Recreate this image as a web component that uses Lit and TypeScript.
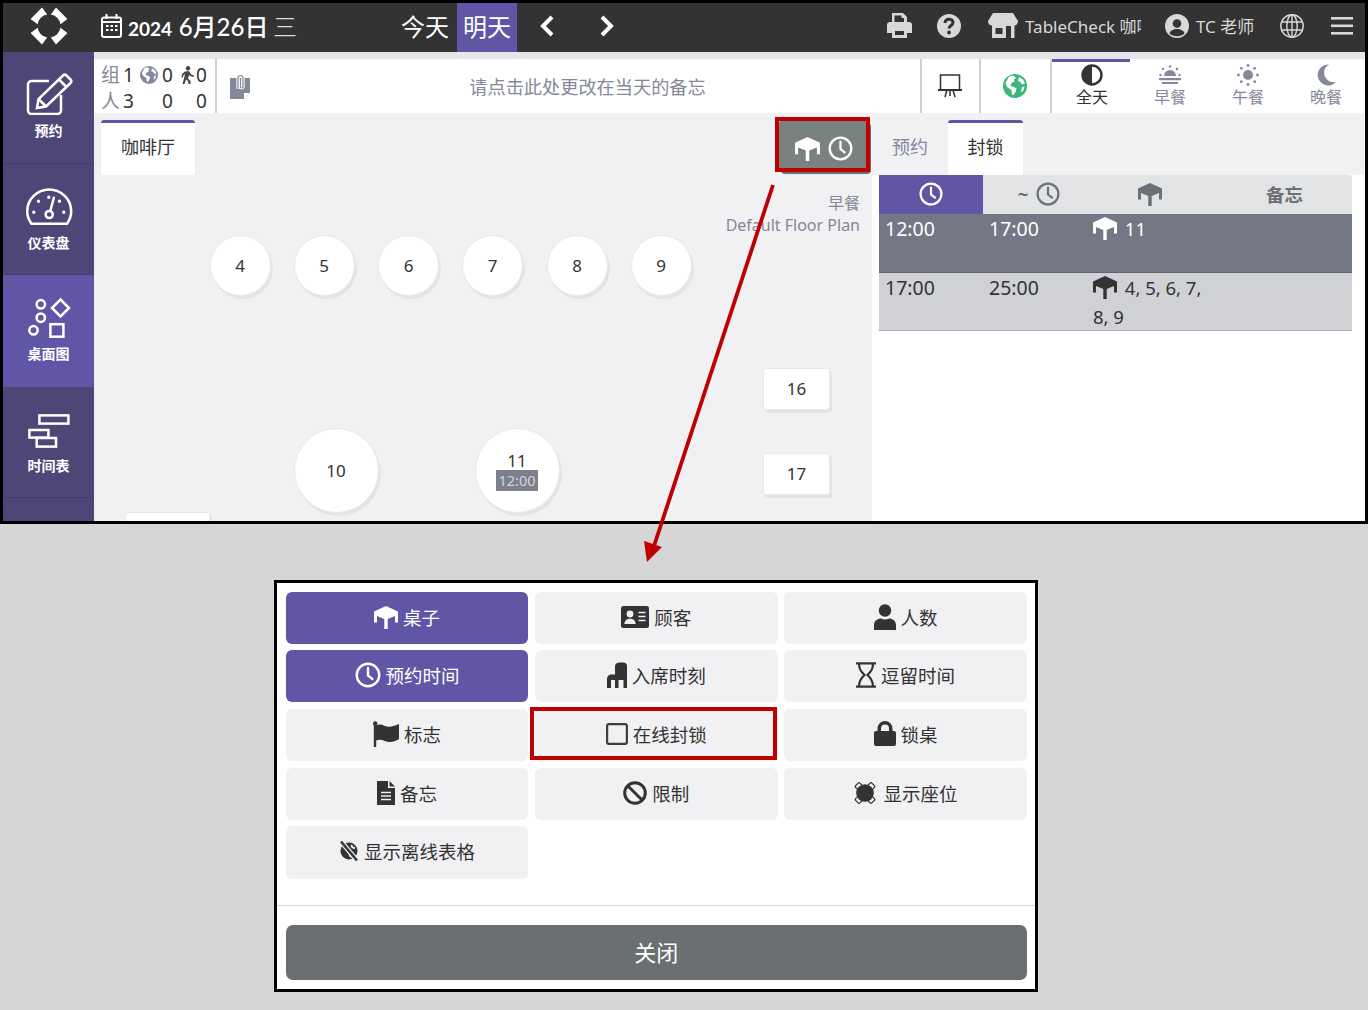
import { LitElement, html, css, svg } from 'lit';
import { customElement } from 'lit/decorators.js';

const table = (size = 24) => html`<svg class="ic" width=${size} height=${size} viewBox="0 0 24 24" fill="currentColor">
  <path d="M12 1 24 6.500V17.500H21V11L13.700 14V24H10.300V14L3 11V17.500H0V6.500z"/></svg>`;
const clock = (size = 26) => html`<svg class="ic" width=${size} height=${size} viewBox="0 0 24 24" fill="none" stroke="currentColor" stroke-width="2.200">
  <circle cx="12" cy="12" r="10.400"/><path d="M12 5.500V12.500l4 3.200" stroke-linecap="round"/></svg>`;

const icons: Record<string, unknown> = {
  table: table(24),
  clock: clock(26),
  card: html`<svg class="ic" width="28" height="22" viewBox="0 0 28 22"><rect width="28" height="22" rx="2.500" fill="currentColor"/>
    <circle cx="9" cy="8" r="3.400" fill="#f1f1f3"/><path d="M3.400 18c0-7 11.200-7 11.200 0z" fill="#f1f1f3"/>
    <path d="M17.500 6.500h7M17.500 10.500h7M17.500 14.500h7" stroke="#f1f1f3" stroke-width="1.700"/></svg>`,
  person: html`<svg class="ic" width="22" height="26" viewBox="0 0 22 26" fill="currentColor"><circle cx="11" cy="6.500" r="6.200"/><path d="M0 26v-4.500C0 16.500 3.500 14.500 7 14.500c1.300.6 2.500 1 4 1s2.700-.4 4-1c3.500 0 7 2 7 7V26z"/></svg>`,
  chair: html`<svg class="ic" width="20" height="26" viewBox="0 0 20 26" fill="currentColor"><path d="M8 4.500C8 2 10 .5 12.500.5h4C18.500.5 20 2 20 4v22h-3.500v-8h-5v8H8v-8H4v8H0v-9c0-3 2-4.500 4-4.500h4z"/></svg>`,
  hourglass: html`<svg class="ic" width="20" height="26" viewBox="0 0 20 26" fill="none" stroke="currentColor" stroke-width="2.300"><path d="M0 1.300h20M0 24.700h20M3 1.300c0 5 1 7.700 5.500 11.700C4 17 3 20 3 24.700M17 1.300c0 5-1 7.700-5.500 11.700C16 17 17 20 17 24.700"/></svg>`,
  flag: html`<svg class="ic" width="26" height="26" viewBox="0 0 26 26" fill="currentColor"><circle cx="2.200" cy="2.500" r="2.200"/><path d="M.8 3h2.400v23H.8z"/><path d="M3 4.500c6-3.500 9 2.500 15.500 1 2.500-.5 5-1.500 7.500-2.500v15c-3 2-6 3-9 3-5.500 0-8-4-14-1.500z"/></svg>`,
  square: html`<svg class="ic" width="22" height="22" viewBox="0 0 22 22" fill="none" stroke="#3f3f3f" stroke-width="2.200"><rect x="1.100" y="1.100" width="19.800" height="19.800" rx="1.800"/></svg>`,
  lock: html`<svg class="ic" width="22" height="25" viewBox="0 0 22 25" fill="currentColor"><path d="M3.500 10V7.500a7.500 7.500 0 0 1 15 0V10H20a2 2 0 0 1 2 2v11a2 2 0 0 1-2 2H2a2 2 0 0 1-2-2V12a2 2 0 0 1 2-2zm3.500 0h8V7.500a4 4 0 0 0-8 0z"/></svg>`,
  doc: html`<svg class="ic" width="18" height="24" viewBox="0 0 18 24"><path d="M0 0h11v7h7v17H0z" fill="currentColor"/><path d="M12.500 0 18 5.500h-5.500z" fill="currentColor"/><path d="M4 11.500h10M4 15h10M4 18.500h10" stroke="#f1f1f3" stroke-width="1.500"/></svg>`,
  ban: html`<svg class="ic" width="24" height="24" viewBox="0 0 24 24" fill="none" stroke="currentColor" stroke-width="3"><circle cx="12" cy="12" r="10.300"/><path d="M4.700 4.700 19.300 19.300"/></svg>`,
  seats: html`<svg class="ic seat" width="22" height="22" viewBox="0 0 22 22"><g fill="#f1f1f3" stroke="currentColor" stroke-width="1.300"><rect x="2" y="1.500" width="6" height="6" rx="1.200" transform="rotate(45 5 4.500)"/><rect x="14" y="1.500" width="6" height="6" rx="1.200" transform="rotate(45 17 4.500)"/><rect x="2" y="14.500" width="6" height="6" rx="1.200" transform="rotate(45 5 17.500)"/><rect x="14" y="14.500" width="6" height="6" rx="1.200" transform="rotate(45 17 17.500)"/></g><circle cx="11" cy="11" r="8.800" fill="currentColor"/></svg>`,
  offline: html`<svg class="ic" width="20" height="22" viewBox="0 0 20 22"><circle cx="10" cy="11" r="8.500" fill="currentColor"/><path d="M5 6.500c3 .5 2 3 4 4.500s1 4 3 6M13 5c-1 2 1 3 3 3" stroke="#f1f1f3" stroke-width="2" fill="none"/><path d="M2 1.500 18 20.500" stroke="#f1f1f3" stroke-width="5"/><path d="M2 1.500 18 20.500" stroke="currentColor" stroke-width="2.500"/></svg>`,
};

const globe = (size: number, fill: string, land: string) => html`<svg class="ic" width=${size} height=${size} viewBox="0 0 24 24">
  <circle cx="12" cy="12" r="12" fill=${fill}/>
  <path d="M6 2.500 10.500 1.500 13 4l-2 1.500.5 2-3 1.500-1 3 3.500 1 2.500 1.500-1 3.500-2 3-1.500-.5L8.500 16 4 13 2.500 9zM16 3l4 2.500 2 4-3 1-1.500-2.500L15 7zM19 13l2.500-.5-1 4-2.500 2z" fill=${land}/></svg>`;

const navItems = [
  { label: '预约', icon: svg`<path d="M24 8H6.500A3.500 3.500 0 0 0 3 11.500v26A3.500 3.500 0 0 0 6.500 41h26a3.500 3.500 0 0 0 3.500-3.500V22"/><path d="M12 35l1.500-9L38 2.500a2.500 2.500 0 0 1 3.500 0l4 4a2.500 2.500 0 0 1 0 3.500L21 33.500zM13.500 26l7.500 7.500M34 6.500l7.500 7.500"/>` },
  { label: '仪表盘', icon: svg`<path d="M6.500 38.800C3.700 35 2.200 31 2.200 26.500A22 22 0 0 1 46.200 26.500C46.200 31 44.700 35 42 38.800z"/><circle cx="24.200" cy="29.500" r="3.600"/><path d="M25.300 26 28.800 12.800" stroke-linecap="round"/><path d="M23.800 12.200v.01M13.500 16.200v.01M34.500 16.200v.01M8.800 27.200v.01M38.800 27.200v.01" stroke-width="3.400" stroke-linecap="round"/>` },
  { label: '桌面图', active: true, icon: svg`<circle cx="15.800" cy="8.300" r="4.200"/><circle cx="15.800" cy="21.700" r="4.200"/><circle cx="8.500" cy="34.300" r="4.200"/><path d="M35.500 3.500 44 12l-8.500 8.500L27 12z"/><rect x="25.400" y="28.200" width="13" height="12.500"/>` },
  { label: '时间表', icon: svg`<rect x="14.400" y="7.400" width="29" height="8.200"/><rect x="4.400" y="22" width="19" height="7.600"/><rect x="11.700" y="30" width="19.300" height="8.600"/>` },
];

const modalButtons = [
  { label: '桌子', icon: 'table', on: true },
  { label: '顾客', icon: 'card' },
  { label: '人数', icon: 'person' },
  { label: '预约时间', icon: 'clock', on: true },
  { label: '入席时刻', icon: 'chair' },
  { label: '逗留时间', icon: 'hourglass' },
  { label: '标志', icon: 'flag' },
  { label: '在线封锁', icon: 'square', marked: true },
  { label: '锁桌', icon: 'lock' },
  { label: '备忘', icon: 'doc' },
  { label: '限制', icon: 'ban' },
  { label: '显示座位', icon: 'seats' },
  { label: '显示离线表格', icon: 'offline' },
];

// floor plan: table positions are the content here
const floorTables = [
  { n: '4', x: 209.500, y: 235, w: 61, h: 61, round: true },
  { n: '5', x: 293.500, y: 235, w: 61, h: 61, round: true },
  { n: '6', x: 378, y: 235, w: 61, h: 61, round: true },
  { n: '7', x: 462, y: 235, w: 61, h: 61, round: true },
  { n: '8', x: 546.500, y: 235, w: 61, h: 61, round: true },
  { n: '9', x: 630.500, y: 235, w: 61, h: 61, round: true },
  { n: '10', x: 293.500, y: 428, w: 85, h: 85, round: true },
  { n: '11', x: 474.500, y: 428, w: 85, h: 85, round: true, time: '12:00' },
  { n: '16', x: 763, y: 367.500, w: 67, h: 42 },
  { n: '17', x: 763, y: 452.500, w: 67, h: 42 },
  { n: '', x: 125, y: 512, w: 85, h: 42 },
];

@customElement('app-root')
export class AppRoot extends LitElement {
  static styles = css`
    :host {
      display: block;
      position: relative;
      width: 1368px;
      height: 1010px;
      overflow: hidden;
      background: #d6d6d6;
      font-family: 'Noto Sans', 'Noto Sans CJK SC', sans-serif;
      color: #333;
    }
    .ic { display: block; flex: none; }
    .frame {
      box-sizing: border-box;
      height: 524px;
      border: 3px solid #000;
      display: flex;
      flex-direction: column;
      overflow: hidden;
      background: #f1f1f3;
    }
    .header {
      height: 49px;
      flex: none;
      box-sizing: border-box;
      background: #333;
      color: #fff;
      display: flex;
      align-items: center;
      padding-bottom: 4px;
    }
    .logo { width: 91px; display: flex; justify-content: center; }
    .date { display: flex; align-items: center; gap: 6px; margin-left: 7px; width: 296px; font-family: Lato, 'Noto Sans CJK SC', sans-serif; font-weight: 700; font-size: 19px; white-space: nowrap; }
    .date b { font-size: 24px; font-weight: 500; margin-left: 2px; }
    .date i { font-style: normal; font-size: 24px; font-weight: 300; color: #ddd; }
    .day { width: 60px; height: 49px; margin-bottom: -4px; box-sizing: border-box; padding: 0 4px 4px 0; display: flex; align-items: center; justify-content: center; font-size: 24px; }
    .day.on { background: #6056a5; padding-right: 0; }
    .chev { margin-left: 12px; width: 36px; display: flex; justify-content: center; }
    .chev + .chev { margin-left: 24px; }
    .head-right { margin-left: auto; display: flex; align-items: center; color: #d8d8d8; font-size: 17px; }
    .head-right .t { white-space: nowrap; }
    .body { flex: 1; display: flex; min-height: 0; }
    .side { width: 91px; flex: none; background: #4f4678; color: #fff; }
    .nav { height: 111.500px; box-sizing: border-box; border-bottom: 1px solid #443c6b; display: flex; flex-direction: column; align-items: center; padding-top: 21px; gap: 6px; font-size: 14px; line-height: 19px; font-weight: 700; }
    .nav.on { background: #6056a5; border-bottom-color: #6056a5; }
    .nav svg { fill: none; stroke: #fff; stroke-width: 2.500; flex: none; }
    .main { flex: 1; min-width: 0; display: flex; flex-direction: column; }
    .sub { flex: none; height: 61px; box-sizing: border-box; border-top: 7px solid #e6e6ea; background: #fff; display: flex; padding-right: 1px; }
    .stats { width: 123px; flex: none; box-sizing: border-box; border-right: 2px solid #d0d0d6; padding: 3px 7px 0; display: grid; grid-template-columns: 39px 40px 1fr; grid-auto-rows: 26px; font-size: 19px; line-height: 26px; color: #333; }
    .stats span { display: flex; align-items: center; gap: 2px; white-space: nowrap; }
    .stats span.g { gap: 4px; }
    .stats em { font-style: normal; color: #85879a; font-size: 19px; margin-right: 1px; }
    .memo { flex: 1; display: flex; align-items: center; padding-left: 13px; color: #85879a; font-size: 18.200px; }
    .memo p { flex: 1; margin: 0; text-align: center; padding-left: 5px; }
    .sub-btn { box-sizing: border-box; display: flex; align-items: center; justify-content: center; border-left: 2px solid #d0d0d6; flex: none; padding-right: 2px; }
    .meal { width: 78px; flex: none; box-sizing: border-box; padding-left: 2px; display: flex; flex-direction: column; align-items: center; color: #85879a; font-size: 16px; line-height: 21px; }
    .meal.first { width: 80px; border-left: 2px solid #d0d0d6; }
    .meal.on { color: #333; box-shadow: inset 0 3px 0 #6056a5; }
    .meal svg { height: 24px; margin-top: 4px; }
    .work { flex: 1; min-height: 0; display: flex; }
    .floor { flex: 1; min-width: 0; padding: 7px; }
    .tab { display: flex; align-items: center; justify-content: center; height: 55px; box-sizing: border-box; padding-bottom: 3px; font-size: 18px; color: #85879a; }
    .tab.on { background: #fff; color: #333; border-top: 3px solid #6056a5; border-radius: 3px 3px 0 0; padding-bottom: 6px; }
    .floor .tab { width: 94px; }
    .right { width: 493px; flex: none; display: flex; flex-direction: column; }
    .tabs { display: flex; flex: none; margin-top: 7px; }
    .tabs .tab { width: 76px; }
    .tabs .tab.on { width: 75px; }
    .panel { flex: 1; background: #fff; padding-left: 7px; padding-right: 13px; font-size: 19.500px; }
    .grid { display: grid; grid-template-columns: 104px 104px 126px 1fr; }
    .thead { background: #e2e3e5; height: 39px; color: #6d6f78; border-radius: 0 3px 0 0; align-items: center; font-weight: 700; font-size: 18.500px; }
    .thead > div { box-sizing: border-box; padding-bottom: 2px; display: flex; justify-content: center; align-items: center; height: 100%; gap: 8px; }
    .thead .shift { padding-left: 8px; }
    .thead .note { padding-left: 4px; }
    .thead .on { background: #6056a5; color: #fff; }
    .row { border-bottom: 1px solid #5d6070; background: #747885; color: #fff; height: 59px; box-sizing: border-box; }
    .row.b { background: #d0d1d5; color: #333; border-bottom-color: #a9aab2; height: 58px; }
    .row > div { padding-left: 6px; line-height: 29px; }
    .row .tb { padding-left: 0; margin-left: 6px; width: 118px; font-size: 18.500px; }
    .row .tb .ic { display: inline-block; vertical-align: -4px; margin-right: 3px; }
    .overlay { position: absolute; left: 0; top: 0; pointer-events: none; }
    .toggle { position: absolute; left: 779px; top: 120px; width: 90px; height: 51px; box-sizing: border-box; padding-top: 5px; background: #7a8181; border-radius: 4px; box-shadow: 2px 3px 0 #6a6f6f; color: #fff; display: flex; align-items: center; justify-content: center; gap: 8px; }
    .callout { position: absolute; left: 775px; top: 117px; width: 95px; height: 55px; border: 4px solid #bf0000; box-sizing: border-box; }
    .plan { position: absolute; right: 508px; top: 192px; text-align: right; color: #85879a; font-size: 16px; line-height: 22px; }
    .tbl { position: absolute; box-sizing: border-box; background: #fff; border: 1px solid #e9e9e9; box-shadow: 2px 3px 0 #e4e4e4; border-radius: 3px; display: flex; flex-direction: column; align-items: center; justify-content: center; font-size: 17px; line-height: 19px; color: #333; }
    .tbl.round { border-radius: 50%; }
    .tbl small { background: #7c7f8c; color: #d3d4d8; font-size: 14.500px; line-height: 21px; padding: 0 2px; }
    .clip { position: absolute; left: 0; top: 0; width: 1368px; height: 521px; overflow: hidden; }
    .modal { position: absolute; left: 274px; top: 580px; width: 764px; height: 412px; box-sizing: border-box; background: #fff; border: 3px solid #000; padding: 8.800px 8.200px 9px 8.800px; display: flex; flex-direction: column; }
    .mgrid { display: grid; grid-template-columns: repeat(3, 1fr); grid-template-rows: repeat(4, 52px) 52.600px; gap: 6.600px; height: 287px; }
    .mbtn { box-sizing: border-box; padding-bottom: 2px; background: #f1f1f3; border-radius: 6px; display: flex; align-items: center; justify-content: center; gap: 5px; font-size: 18.500px; color: #333; position: relative; }
    .mbtn.on { background: #6056a5; color: #fff; }
    .mbtn.marked::after { content: ''; position: absolute; inset: -2px 1px 1px -5px; border: 4px solid #bf0000; }
    .seat { margin-right: 3px; }
    .rule { height: 1px; background: #d4d4d4; margin: 26px -8.200px 19px -8.800px; flex: none; }
    .close { height: 55px; flex: none; box-sizing: border-box; padding-bottom: 3px; background: #6a7071; color: #fff; border-radius: 7px; display: flex; align-items: center; justify-content: center; font-size: 22px; }
  `;

  protected render() {
    return html`
      <div class="frame">
        <div class="header">
          <div class="logo">
            <svg width="38" height="38" viewBox="0 0 38 38" fill="#fff">
              <path d="M17.200 7.600 12 .6 .6 12l7 5.200A11.500 11.500 0 0 1 17.200 7.600z"/>
              <path d="M20.800 7.600 26 .6 37.400 12l-7 5.200A11.500 11.500 0 0 0 20.800 7.600z"/>
              <path d="M17.200 30.400 12 37.400 .6 26l7-5.200A11.500 11.500 0 0 0 17.200 30.400z"/>
              <path d="M20.800 30.400 26 37.400 37.400 26l-7-5.200A11.500 11.500 0 0 1 20.800 30.400z"/>
            </svg>
          </div>
          <div class="date">
            <svg class="ic" width="21" height="24" viewBox="0 0 21 24" fill="none" stroke="#fff" stroke-width="2"><rect x="1" y="3.500" width="19" height="19.500" rx="2"/><path d="M5.500 0v5M15.500 0v5M1 8h19" /><path d="M5 12h2.500M9.500 12H12M14 12h2.500M5 16h2.500M9.500 16H12M14 16h2.500" stroke-width="2.200"/></svg>
            <span>2024 <b>6月26日</b> <i>三</i></span>
          </div>
          <div class="day">今天</div>
          <div class="day on">明天</div>
          <div class="chev"><svg width="14" height="22" viewBox="0 0 14 22" fill="none" stroke="#fff" stroke-width="4"><path d="M12 2 3 11l9 9"/></svg></div>
          <div class="chev"><svg width="14" height="22" viewBox="0 0 14 22" fill="none" stroke="#fff" stroke-width="4"><path d="M2 2l9 9-9 9"/></svg></div>
          <div class="head-right">
            <svg class="ic" width="25" height="25" viewBox="0 0 25 25" fill="#d8d8d8"><path d="M5 0h11l4 4v6h-3V5h-2.500V2.500H7.500V10H5z"/><path d="M3 9h19a3 3 0 0 1 3 3v8h-5v5H5v-5H0v-8a3 3 0 0 1 3-3zm5 9v4h9v-4z"/></svg>
            <svg class="ic" style="margin-left:25px" width="24" height="24" viewBox="0 0 24 24"><circle cx="12" cy="12" r="12" fill="#d8d8d8"/><path d="M8 9c0-5 8-5 8-.500 0 3-4 3-4 6" fill="none" stroke="#333" stroke-width="3"/><circle cx="12" cy="18.500" r="1.900" fill="#333"/></svg>
            <svg class="ic" style="margin-left:27px" width="30" height="25" viewBox="0 0 30 25" fill="#d8d8d8"><path d="M5 0h20l5 8c0 3-2 4.500-3.500 4.500V25h-3.500V13H18v12H4V12.500C2 12.500 0 11 0 8zM7.500 15v6h7v-6z"/></svg>
            <span class="t" style="margin-left:7px;width:116px;overflow:hidden">TableCheck 咖啡厅</span>
            <svg class="ic" style="margin-left:24px" width="24" height="24" viewBox="0 0 24 24"><circle cx="12" cy="12" r="12" fill="#d8d8d8"/><circle cx="12" cy="9.500" r="4.300" fill="#333"/><path d="M4.500 19.500c1-6 14-6 15 0-4 3.500-11 3.500-15 0z" fill="#333"/></svg>
            <span class="t" style="margin-left:7px;width:58px">TC 老师</span>
            <svg class="ic" style="margin-left:26px" width="24" height="24" viewBox="0 0 24 24" fill="none" stroke="#d8d8d8" stroke-width="1.400"><circle cx="12" cy="12" r="11.200"/><ellipse cx="12" cy="12" rx="5.200" ry="11.200"/><path d="M1.500 8h21M1.500 16h21M12 1v22"/></svg>
            <svg class="ic" style="margin:0 12px 0 27px" width="22" height="18" viewBox="0 0 22 18" fill="#d8d8d8"><rect width="22" height="2.600"/><rect y="7.500" width="22" height="2.600"/><rect y="15" width="22" height="2.600"/></svg>
          </div>
        </div>
        <div class="body">
          <div class="side">
            ${navItems.map(n => html`<div class="nav ${n.active ? 'on' : ''}">
              <svg width="48" height="42" viewBox="0 0 48 42">${n.icon}</svg>${n.label}</div>`)}
          </div>
          <div class="main">
            <div class="sub">
              <div class="stats">
                <span><em>组</em>1</span>
                <span class="g">${globe(18, '#85879a', '#fff')}0</span>
                <span><svg class="ic" width="14" height="18" viewBox="0 0 14 18" fill="#444"><circle cx="8" cy="2.300" r="2.200"/><path d="M5 5.500 9 5l2 3.500 3 1-.5 1.500-3.500-1-1-1-1 3.500 2.500 2.500V18H8.500l-.5-3-2-1.500L4.500 18H2.500l2-7.500.5-2.500-1.500 1-.5 2.500H1.500L2 8z"/></svg>0</span>
                <span><em>人</em>3</span>
                <span style="padding-left:22px">0</span>
                <span style="padding-left:16px">0</span>
              </div>
              <div class="memo">
                <svg class="ic" width="20" height="25" viewBox="0 0 20 25"><path d="M0 4h20v15l-6 6H0z" fill="#85879a"/><path d="M14 25v-6h6z" fill="#fff"/><path d="M8 15V4a2.500 2.500 0 0 1 5 0v9a1.300 1.300 0 0 1-2.500 0V5" fill="none" stroke="#fff" stroke-width="3.200"/><path d="M8 15V4a2.500 2.500 0 0 1 5 0v9a1.300 1.300 0 0 1-2.500 0V5" fill="none" stroke="#85879a" stroke-width="1.200"/></svg>
                <p>请点击此处更改在当天的备忘</p>
              </div>
              <div class="sub-btn" style="width:59px">
                <svg class="ic" width="24" height="24" viewBox="0 0 24 24" fill="none" stroke="#333" stroke-width="1.500"><path d="M2.500 15V1h19v14"/><path d="M0 16h24" stroke-width="2"/><path d="M7 23l2-7M12 16v6M17 23l-2-7"/></svg>
              </div>
              <div class="sub-btn" style="width:71px">${globe(24, '#3bb878', '#fff')}</div>
              <div class="meal first on">
                <svg class="ic" width="22" height="24" viewBox="0 0 22 22"><circle cx="11" cy="11" r="9.500" fill="none" stroke="#333" stroke-width="2.400"/><path d="M11 1.500a9.500 9.500 0 0 0 0 19z" fill="#333"/></svg>全天</div>
              <div class="meal">
                <svg class="ic" width="22" height="24" viewBox="0 0 22 22" fill="#85879a"><path d="M5 12a6 6 0 0 1 12 0z"/><rect y="14" width="22" height="2.200"/><rect x="3" y="18" width="16" height="2"/><circle cx="11" cy="2.500" r="1.200"/><circle cx="4" cy="5" r="1.200"/><circle cx="18" cy="5" r="1.200"/><circle cx="1.500" cy="11" r="1.200"/><circle cx="20.500" cy="11" r="1.200"/></svg>早餐</div>
              <div class="meal">
                <svg class="ic" width="22" height="24" viewBox="0 0 22 22" fill="#85879a"><circle cx="11" cy="11" r="5"/><circle cx="11" cy="1.500" r="1.400"/><circle cx="11" cy="20.500" r="1.400"/><circle cx="1.500" cy="11" r="1.400"/><circle cx="20.500" cy="11" r="1.400"/><circle cx="4.300" cy="4.300" r="1.400"/><circle cx="17.700" cy="4.300" r="1.400"/><circle cx="4.300" cy="17.700" r="1.400"/><circle cx="17.700" cy="17.700" r="1.400"/></svg>午餐</div>
              <div class="meal">
                <svg class="ic" width="22" height="24" viewBox="0 0 22 22" fill="#85879a"><path d="M14 .5A10.500 10.500 0 1 0 21 18 9.500 9.500 0 0 1 14 .5z"/></svg>晚餐</div>
            </div>
            <div class="work">
              <div class="floor"><div class="tab on">咖啡厅</div></div>
              <div class="right">
                <div class="tabs">
                  <div class="tab">预约</div>
                  <div class="tab on">封锁</div>
                </div>
                <div class="panel">
                  <div class="grid thead">
                    <div class="on">${clock(24)}</div>
                    <div class="shift">~ ${clock(24)}</div>
                    <div>${table(24)}</div>
                    <div class="note">备忘</div>
                  </div>
                  <div class="grid row">
                    <div>12:00</div><div>17:00</div>
                    <div class="tb">${table(24)} 11</div>
                  </div>
                  <div class="grid row b">
                    <div>17:00</div><div>25:00</div>
                    <div class="tb">${table(24)} 4, 5, 6, 7, 8, 9</div>
                  </div>
                </div>
              </div>
            </div>
          </div>
        </div>
      </div>

      <div class="clip">
        <div class="plan">早餐<br />Default Floor Plan</div>
        ${floorTables.map(t => html`<div class="tbl ${t.round ? 'round' : ''}" style="left:${t.x}px;top:${t.y}px;width:${t.w}px;height:${t.h}px">
          ${t.n}${t.time ? html`<small>${t.time}</small>` : ''}</div>`)}
      </div>

      <div class="toggle">${table(25)}${clock(25)}</div>
      <div class="callout"></div>

      <div class="modal">
        <div class="mgrid">
          ${modalButtons.map(b => html`<div class="mbtn ${b.on ? 'on' : ''} ${b.marked ? 'marked' : ''}">${icons[b.icon]}${b.label}</div>`)}
        </div>
        <div class="rule"></div>
        <div class="close">关闭</div>
      </div>

      <svg class="overlay" width="1368" height="1010" viewBox="0 0 1368 1010">
        <path d="M773 185 654 546" stroke="#bf0000" stroke-width="3.800" fill="none"/>
        <path d="M647 562 644 541 662 547z" fill="#bf0000"/>
      </svg>
    `;
  }
}

declare global {
  interface HTMLElementTagNameMap {
    'app-root': AppRoot;
  }
}
